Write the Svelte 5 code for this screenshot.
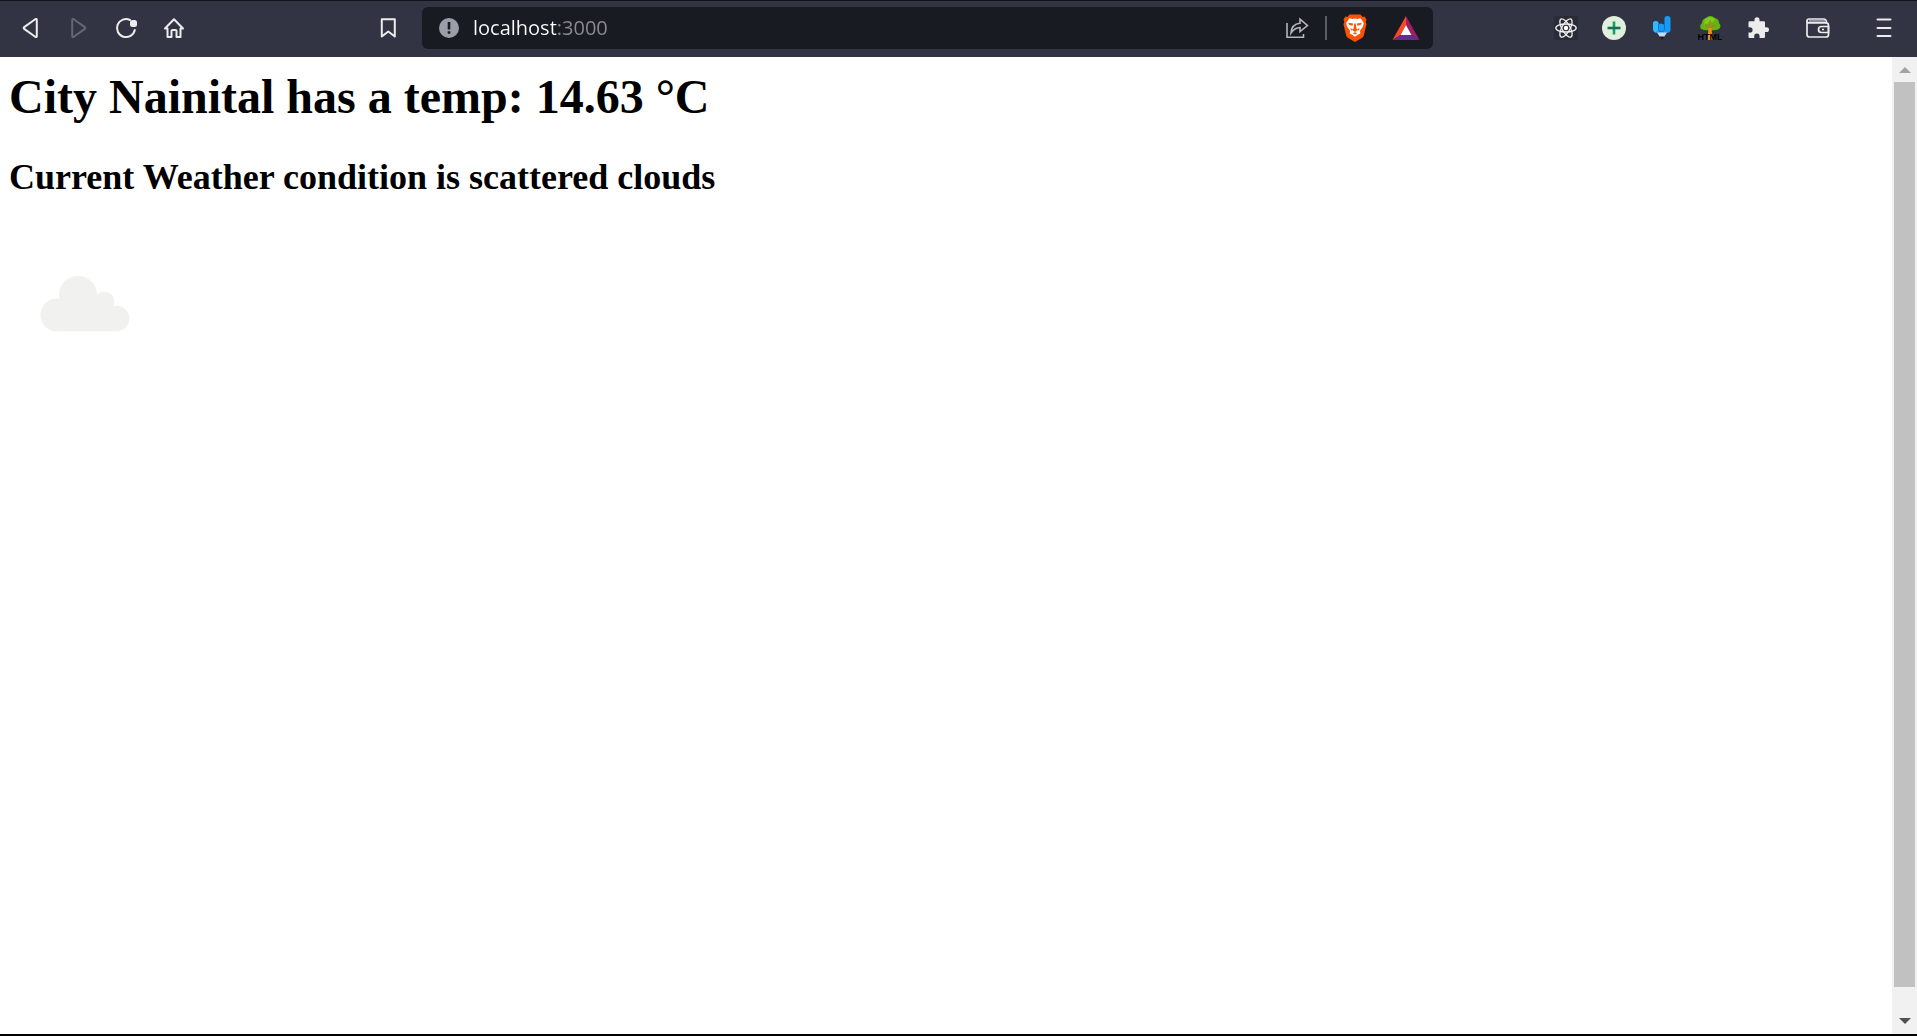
<script>
  const weather = { city: 'Nainital', temp: 14.63, condition: 'scattered clouds' };
  let address = $state('localhost:3000');
</script>

<div class="browser">
  <header class="toolbar">
    <nav class="group" aria-label="Navigation">
      <button class="tool" aria-label="Back">
        <svg width="24" height="24" viewBox="0 0 24 24"><path d="M18.800 4v16q0 1.600-1.600.8l-11-7.900q-1-.9 0-1.800l11-7.900q1.600-.8 1.600.8Z" fill="none" stroke="#ececec" stroke-width="2" stroke-linejoin="round" /></svg>
      </button>
      <button class="tool" aria-label="Forward" disabled>
        <svg width="24" height="24" viewBox="0 0 24 24"><path d="M6.200 4v16q0 1.600 1.600.8l11-7.900q1-.9 0-1.800l-11-7.900Q6.200 2.400 6.200 4Z" fill="none" stroke="#646673" stroke-width="2" stroke-linejoin="round" /></svg>
      </button>
      <button class="tool" aria-label="Reload">
        <svg width="24" height="24" viewBox="0 0 24 24"><path d="M16 4A9 9 0 1 0 20.800 14" fill="none" stroke="#ececec" stroke-width="2" stroke-linecap="round" /><rect x="16" y="4" width="7" height="7" rx="2.500" fill="#ececec" /></svg>
      </button>
      <button class="tool" aria-label="Home">
        <svg width="24" height="24" viewBox="0 0 24 24"><path d="M3 12.500 12 3.300l9 9.200h-2.500v8.500h-4v-6q0-1-1-1h-3q-1 0-1 1v6h-4v-8.500Z" fill="none" stroke="#ececec" stroke-width="2" stroke-linejoin="round" /></svg>
      </button>
    </nav>
    <div class="lead">
      <button class="tool" aria-label="Bookmark this page">
        <svg width="24" height="24" viewBox="0 0 24 24"><path d="M5.800 3.300h13v17.200l-6.500-5-6.500 5Z" fill="none" stroke="#ececec" stroke-width="2" stroke-linejoin="round" /></svg>
      </button>
    </div>
    <div class="omnibox">
      <svg class="info" width="20" height="20" viewBox="0 0 20 20"><circle cx="10" cy="10" r="10" fill="#9b9da7" /><path d="M8.700 4h2.600v7.500H8.700zM8.700 13.200h2.600v2.600H8.700z" fill="#191b22" /></svg>
      <input class="address" aria-label="Address" bind:value={address} spellcheck="false" />
      <button class="tool" aria-label="Share">
        <svg width="24" height="24" viewBox="0 0 24 24"><g fill="none" stroke="#b5b6ba" stroke-width="1.600"><path d="M2 7v14.300h16.500V18" /><path d="M15 3.200 22.400 9.500 15 15.500v-4Q9.500 11.800 6 17 6.500 8 15 7.200Z" /></g></svg>
      </button>
      <span class="divider"></span>
      <button class="tool" aria-label="Brave Shields">
        <svg width="24" height="28" viewBox="0 0 24 28"><path d="M6.500.5h11l2 2.400 2.200-.3 1.800 3.200-.8 2 .8 2.400-2.700 11.300q-.4 1.400-1.600 2.200L12 28l-7.200-4.300q-1.200-.8-1.600-2.200L.5 10.200l.8-2.400-.8-2 1.800-3.200 2.200.3Z" fill="#fb5204" /><path d="m6.500 4.300 3 .8 2.500-.6 2.500.6 3-.8 3.300 4.700-.8 3.500-3 4.300.3 2.800-2.500 1.200L12 22.800l-2.800-2-2.500-1.200.3-2.800-3-4.300-.8-3.500Z" fill="#fff" /><path d="m5.300 8.700 4.700.8-.3 2.300-3.600-1.100ZM18.700 8.700l-4.700.8.3 2.300 3.600-1.100ZM11.300 9.500h1.400l.8 5.200 1.600 1L12 18l-3.100-2.300 1.600-1ZM7.500 14l1.700 1-1 2ZM16.500 14l-1.700 1 1 2ZM9.700 19.200 12 18.300l2.300.9L12 20.500Z" fill="#fb5204" /></svg>
      </button>
      <button class="tool reward" aria-label="Brave Rewards">
        <svg width="28" height="24" viewBox="0 0 28 24"><path d="M14 0v9L8.500 19 .5 24Z" fill="#ff4724" /><path d="M14 0v9l5.500 10 8 5Z" fill="#9e1f63" /><path d="m.5 24 8-5h11l8 5Z" fill="#662d91" /><path d="m14 9 5.500 10h-11Z" fill="#fff" /></svg>
      </button>
    </div>
    <div class="trail">
      <button class="tool" aria-label="React Developer Tools">
        <svg width="24" height="24" viewBox="0 0 24 24"><rect width="24" height="24" rx="2" fill="#292c36" /><g fill="none" stroke="#f2f2f2" stroke-width="1.300"><ellipse cx="12" cy="12" rx="10.200" ry="4" /><ellipse cx="12" cy="12" rx="10.200" ry="4" transform="rotate(60 12 12)" /><ellipse cx="12" cy="12" rx="10.200" ry="4" transform="rotate(120 12 12)" /></g><circle cx="12" cy="12" r="2.200" fill="#fff" /></svg>
      </button>
      <button class="tool" aria-label="Add item">
        <svg width="24" height="24" viewBox="0 0 24 24"><circle cx="12" cy="12" r="12" fill="#e0f0dd" /><path d="M12 5.500v13" stroke="#10a35c" stroke-width="2.600" /><path d="M5.500 12h13" stroke="#14705c" stroke-width="2.600" /></svg>
      </button>
      <button class="tool" aria-label="Web pencil">
        <svg width="24" height="24" viewBox="0 0 24 24"><path d="M3 7.500Q3 5 5.700 5T8.500 7.500V8Q12 6.500 14.500 9V2.500Q14.500 0 17.500 0t3 2.500V14q0 3-4.500 3H8q-5 0-5-4Z" fill="#159bf6" /><path d="M3 7.500Q3 5 5.700 5T8.500 7.500V14L6 16.500Q3 16 3 12Z" fill="#30b9fb" /><path d="M8.500 8v5.500q0 2 3 2t3-2V9" fill="none" stroke="#0873c7" stroke-width="1" /><path d="M7 16.500h10L14 21h-4Z" fill="#c9d9ec" /><path d="M9.500 20.500h5L12 24Z" fill="#1b1d24" /></svg>
      </button>
      <button class="tool" aria-label="HTML Tree">
        <svg width="24" height="24" viewBox="0 0 24 24"><path d="M3 13Q1 10 4 7 4 3 8 2q4-4 9 0 4 1 4 5 3 3 0 6-4 2-9 1-5 1-9-1Z" fill="#62b50c" /><path d="M7 3q5-4 10 0l-2 3-5 1-4 3Z" fill="#78d019" /><path d="M12 4v9M7 8l5 5 5-5" fill="none" stroke="#b57b20" stroke-width="1.500" /><path d="M10.500 12h3l1 12h-5Z" fill="#ee9118" /><text x="12" y="23.500" text-anchor="middle" class="badge">HTML</text></svg>
      </button>
      <button class="tool" aria-label="Extensions">
        <svg width="24" height="24" viewBox="0 0 24 24"><path d="M2.500 6.500q0-1.200 1.200-1.200h4.800V4q0-2.700 2.500-2.700T13.500 4v1.300h4.300Q19 5.300 19 6.500v4.800h1.300q2.700 0 2.700 2.400t-2.700 2.400H19v4.700q0 1.200-1.200 1.200h-4.200v-1.600q0-2.800-2.700-2.800t-2.700 2.800V22H3.700q-1.200 0-1.200-1.200v-4.300h1.300q2.800 0 2.800-2.600t-2.800-2.600H2.500Z" fill="#ececec" /></svg>
      </button>
      <button class="tool wallet" aria-label="Wallet">
        <svg width="26" height="24" viewBox="0 0 26 24"><g fill="none" stroke="#ececec" stroke-width="1.700" stroke-linejoin="round"><path d="M2 5.500v13Q2 21 4.500 21H21q2.500 0 2.500-2.500V9.300q0-2.500-2.500-2.500H4Q2 6.800 2 5q0-2 2-2h14.500q3 0 3 3.800" /><path d="M23.500 10.500h-7q-3 0-3 3t3 3h7ZM17 13.500h2" /></g><path d="M4 5h16" stroke="#aaaab3" stroke-width="1.500" /></svg>
      </button>
      <button class="tool menu" aria-label="Menu">
        <svg width="24" height="24" viewBox="0 0 24 24"><path d="M5.500 3.500h13M5.500 12h13M5.500 20h13" stroke="#ececec" stroke-width="2" stroke-linecap="round" /></svg>
      </button>
    </div>
  </header>

  <div class="viewport">
    <main>
      <h1>City {weather.city} has a temp: {weather.temp} °C</h1>
      <h2>Current Weather condition is {weather.condition}</h2>
      <svg class="cloud" width="150" height="150" viewBox="0 0 150 150" role="img" aria-label={weather.condition}>
        <g fill="#f1f1ef">
          <circle cx="69" cy="67" r="19" />
          <circle cx="48" cy="87" r="16.500" />
          <circle cx="95" cy="74" r="10.500" />
          <circle cx="107.500" cy="90.500" r="12.800" />
          <path d="M48 75h53l6.500 15v13.300H48Z" />
        </g>
      </svg>
    </main>
    <div class="scrollbar" aria-hidden="true">
      <svg width="12" height="6" viewBox="0 0 12 6"><path d="M0 6 6 0l6 6Z" fill="#a3a3a3" /></svg>
      <div class="track"><div class="thumb"></div></div>
      <svg width="12" height="6" viewBox="0 0 12 6"><path d="M0 0h12L6 6Z" fill="#505050" /></svg>
    </div>
  </div>
</div>

<style>
  :global(body) {
    margin: 0;
  }

  .browser {
    display: flex;
    flex-direction: column;
    box-sizing: border-box;
    height: 100vh;
    border-bottom: 2px solid #000;
    background: #fff;
  }

  .toolbar {
    display: flex;
    align-items: center;
    box-sizing: border-box;
    flex: none;
    height: 57px;
    padding: 0 15px 2px 12px;
    border-top: 1px solid #11121a;
    background: #323443;
  }

  .group,
  .lead,
  .trail {
    display: flex;
    align-items: center;
  }

  .group,
  .trail {
    gap: 12px;
  }

  .lead {
    flex: 178 0 36px;
    justify-content: flex-end;
    margin-right: 16px;
  }

  .trail {
    flex: 115 0 354px;
    justify-content: flex-end;
  }

  .tool {
    display: flex;
    align-items: center;
    justify-content: center;
    flex: none;
    width: 36px;
    height: 36px;
    padding: 0;
    border: 0;
    border-radius: 6px;
    background: none;
  }

  .wallet {
    margin-left: 12px;
  }

  .menu {
    margin-left: 18px;
  }

  .omnibox {
    display: flex;
    align-items: center;
    box-sizing: border-box;
    flex: 985 0 0;
    height: 42px;
    padding: 0 9px 0 17px;
    border-radius: 6px;
    background: #191b22;
  }

  .info {
    flex: none;
    margin-right: 14px;
  }

  .address {
    flex: 1;
    min-width: 0;
    height: 36px;
    padding: 0;
    border: 0;
    outline: 0;
    background: linear-gradient(90deg, #fff 84px, #8b8c91 84px);
    background-clip: text;
    color: transparent;
    font: 20px/36px "Open Sans", "Noto Sans", sans-serif;
  }

  .divider {
    width: 2px;
    height: 24px;
    margin: 0 10px;
    background: #5c5e66;
  }

  .reward {
    margin-left: 15px;
  }

  .badge {
    font: bold 9px "Liberation Sans", sans-serif;
    fill: #000;
  }

  .viewport {
    display: flex;
    flex: 1;
    min-height: 0;
  }

  main {
    flex: 1;
    min-width: 0;
    padding: 12px 9px;
    color: #000;
    font-family: "Liberation Serif", serif;
  }

  h1,
  h2 {
    margin: 0;
    font-weight: bold;
  }

  h1 {
    margin-bottom: 31px;
    font-size: 48px;
    line-height: 56px;
  }

  h2 {
    margin-bottom: 30px;
    font-size: 36px;
    line-height: 42px;
  }

  .cloud {
    display: block;
  }

  .scrollbar {
    display: flex;
    flex-direction: column;
    align-items: center;
    box-sizing: border-box;
    flex: none;
    width: 25px;
    padding: 10px 2px;
    background: #f1f1f1;
  }

  .track {
    flex: 1;
    box-sizing: border-box;
    width: 100%;
    padding: 9px 0 31px;
  }

  .thumb {
    height: 100%;
    background: #c1c1c1;
  }
</style>
